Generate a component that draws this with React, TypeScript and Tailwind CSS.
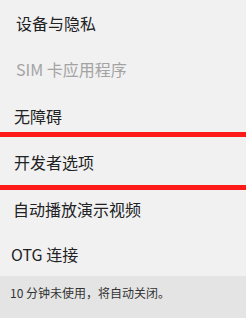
import React from "react";

const font = { fontFamily: '"Noto Sans CJK SC", "Noto Sans", sans-serif' };

export default function App() {
  return (
    <div
      className="relative w-[246px] h-[318px] overflow-hidden bg-[#f1f1f2] flex flex-col"
      style={font}
    >
      <div className="h-[46px] flex items-center pl-[16px] pb-[1px] text-[16px] text-[#222]">设备与隐私</div>
      <div className="h-[47px] flex items-center pl-[16px] pb-[1px] text-[16px] text-[#a3a3a3]">SIM 卡应用程序</div>
      <div className="h-[46px] flex items-center pl-[14px] pb-[1px] text-[16px] text-[#222]">无障碍</div>
      <div className="h-[47px] flex items-center pl-[14px] pb-[1px] text-[16px] text-[#222]">开发者选项</div>
      <div className="h-[46px] flex items-center pl-[13px] pb-[1px] text-[16px] text-[#222]">自动播放演示视频</div>
      <div className="h-[44px] flex items-center pl-[11px] pb-[1px] text-[16px] text-[#222]">OTG 连接</div>
      <div className="flex-1 bg-[#e4e4e5] pl-[10px] pt-[8px] text-[12px] text-[#333]">10 分钟未使用，将自动关闭。</div>
      <div className="absolute left-0 right-0 top-[132px] h-[5px] bg-[#ff1a1a]" />
      <div className="absolute left-0 right-0 top-[185px] h-[5px] bg-[#ff1a1a]" />
    </div>
  );
}
